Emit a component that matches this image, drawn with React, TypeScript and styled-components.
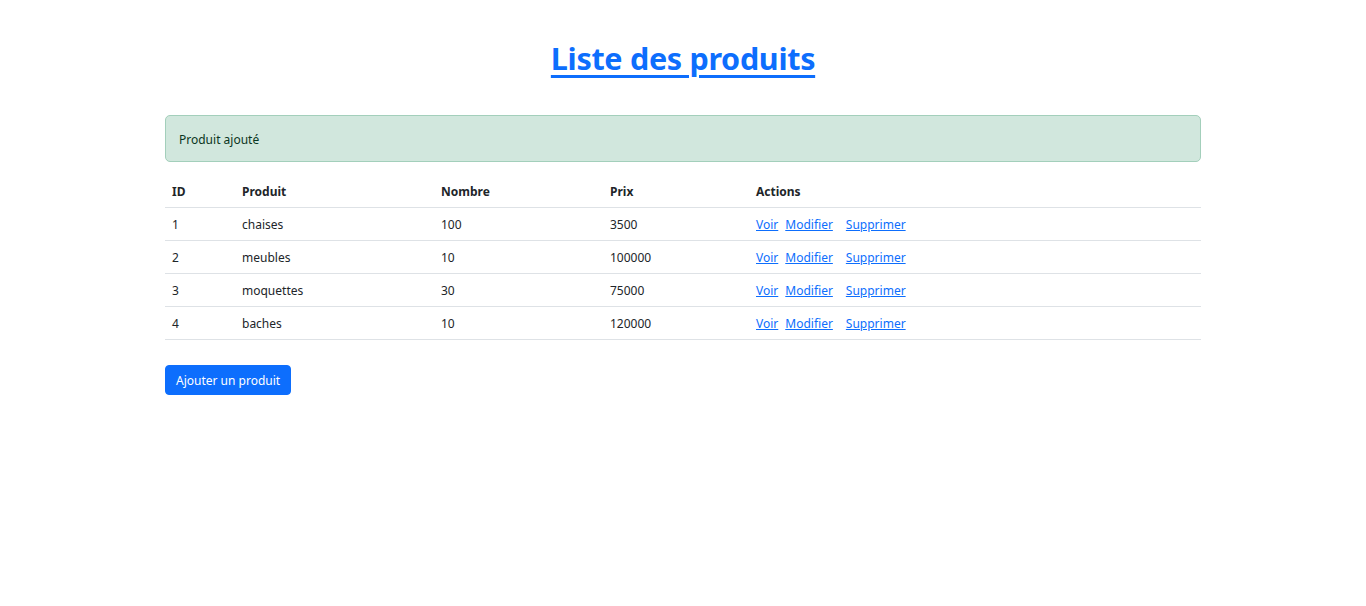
import * as React from "react";
import styled, { createGlobalStyle } from "styled-components";

const GlobalStyle = createGlobalStyle`
  body {
    margin: 0;
    background: #fff;
    color: #212529;
    font-family: "Noto Sans", "Open Sans", sans-serif;
  }
`;

const SPage = styled.div`
  width: 1036px;
  margin: 0 auto;
  padding-top: 35px;
`;

const STitle = styled.h1`
  margin: 0 0 34px;
  text-align: center;
  font-size: 30.5px;
  line-height: 46px;
  font-weight: 700;
  letter-spacing: -0.3px;
`;

const STitleLink = styled.a`
  color: #0d6efd;
  text-decoration: underline;
  text-decoration-thickness: 3px;
  text-underline-offset: 5px;
`;

const SAlert = styled.div`
  padding: 14px 13px 11px;
  font-size: 12px;
  line-height: 20px;
  color: #0a3622;
  background: #d1e7dd;
  border: 1px solid #a3cfbb;
  border-radius: 5px;
  margin-bottom: 13px;
`;

const STable = styled.table`
  width: 100%;
  table-layout: fixed;
  border-collapse: collapse;
  font-size: 12px;
`;

const SHeadCell = styled.th<{ $width?: number }>`
  box-sizing: border-box;
  text-align: left;
  font-weight: 700;
  padding: 9px 7px 7px;
  line-height: 16px;
  border-bottom: 1px solid #dee2e6;
  width: ${(p) => (p.$width ? `${p.$width}px` : "auto")};
`;

const SCell = styled.td`
  padding: 9px 7px 7px;
  line-height: 16px;
  border-bottom: 1px solid #dee2e6;
`;

const SActionLink = styled.a<{ $gap: number }>`
  color: #0d6efd;
  text-decoration: underline;
  margin-right: ${(p) => p.$gap}px;
`;

const SButton = styled.button`
  margin-top: 25px;
  height: 30px;
  padding: 1px 10px 0;
  font-family: inherit;
  font-size: 12px;
  color: #fff;
  background: #0d6efd;
  border: 1px solid #0d6efd;
  border-radius: 4px;
`;

const products = [
  { id: 1, name: "chaises", count: 100, price: 3500 },
  { id: 2, name: "meubles", count: 10, price: 100000 },
  { id: 3, name: "moquettes", count: 30, price: 75000 },
  { id: 4, name: "baches", count: 10, price: 120000 },
];

const App = () => {
  return (
    <>
      <GlobalStyle />
      <SPage>
        <STitle>
          <STitleLink href="#">Liste des produits</STitleLink>
        </STitle>
        <SAlert>Produit ajouté</SAlert>
        <STable>
          <thead>
            <tr>
              <SHeadCell $width={70}>ID</SHeadCell>
              <SHeadCell $width={199}>Produit</SHeadCell>
              <SHeadCell $width={169}>Nombre</SHeadCell>
              <SHeadCell $width={146}>Prix</SHeadCell>
              <SHeadCell>Actions</SHeadCell>
            </tr>
          </thead>
          <tbody>
            {products.map((p) => (
              <tr key={p.id}>
                <SCell>{p.id}</SCell>
                <SCell>{p.name}</SCell>
                <SCell>{p.count}</SCell>
                <SCell>{p.price}</SCell>
                <SCell>
                  <SActionLink href="#" $gap={7}>Voir</SActionLink>
                  <SActionLink href="#" $gap={13}>Modifier</SActionLink>
                  <SActionLink href="#" $gap={0}>Supprimer</SActionLink>
                </SCell>
              </tr>
            ))}
          </tbody>
        </STable>
        <SButton>Ajouter un produit</SButton>
      </SPage>
    </>
  );
};

export default App;
